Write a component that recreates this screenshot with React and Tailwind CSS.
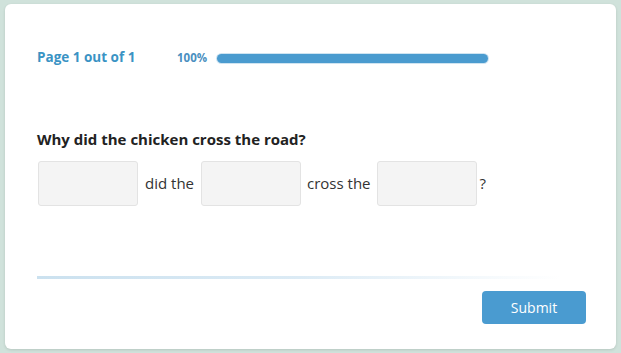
import React from "react";

function Blank() {
  return (
    <input
      type="text"
      className="w-[100px] h-[45px] bg-[#f4f4f4] border border-[#e3e3e3] rounded-[3px] outline-none"
    />
  );
}

export default function App() {
  return (
    <div
      className="w-[621px] h-[353px] bg-[#d0e2db] pt-[4px] pl-[5px]"
      style={{ fontFamily: '"Open Sans", "Noto Sans", sans-serif' }}
    >
      <div className="w-[611px] h-[345px] bg-white rounded-[6px] shadow-[0_1px_3px_rgba(0,0,0,0.12)] flex flex-col pl-[32px] pr-[30px]">
        {/* progress */}
        <div className="flex items-center mt-[46px] h-[16px]">
          <span className="text-[13.5px] font-bold text-[#3a93c4] w-[140px] leading-none">Page 1 out of 1</span>
          <span className="text-[11.5px] font-bold text-[#4a8fc0] w-[40px] leading-none">100%</span>
          <div className="w-[271px] h-[9px] rounded-full bg-[#4a9bcf] ring-1 ring-[#cfe4f1]" />
        </div>

        {/* question */}
        <h2 className="mt-[63px] text-[15px] font-bold text-[#222] leading-[20px]">
          Why did the chicken cross the road?
        </h2>
        <div className="flex items-center mt-[12px] text-[15px] text-[#333] pl-[1px]">
          <Blank />
          <span className="ml-[7px] mr-[7px]">did the</span>
          <Blank />
          <span className="ml-[6px] mr-[6px]">cross the</span>
          <Blank />
          <span className="ml-[3px]">?</span>
        </div>

        {/* footer */}
        <div className="mt-[70px] h-[3px] w-[524px] bg-gradient-to-r from-[#cbe1ef] via-[#dcebf5] to-transparent" />
        <div className="flex justify-end mt-[12px]">
          <button className="w-[104px] h-[33px] bg-[#4a9bd0] text-white text-[14px] rounded-[4px]">
            Submit
          </button>
        </div>
      </div>
    </div>
  );
}
